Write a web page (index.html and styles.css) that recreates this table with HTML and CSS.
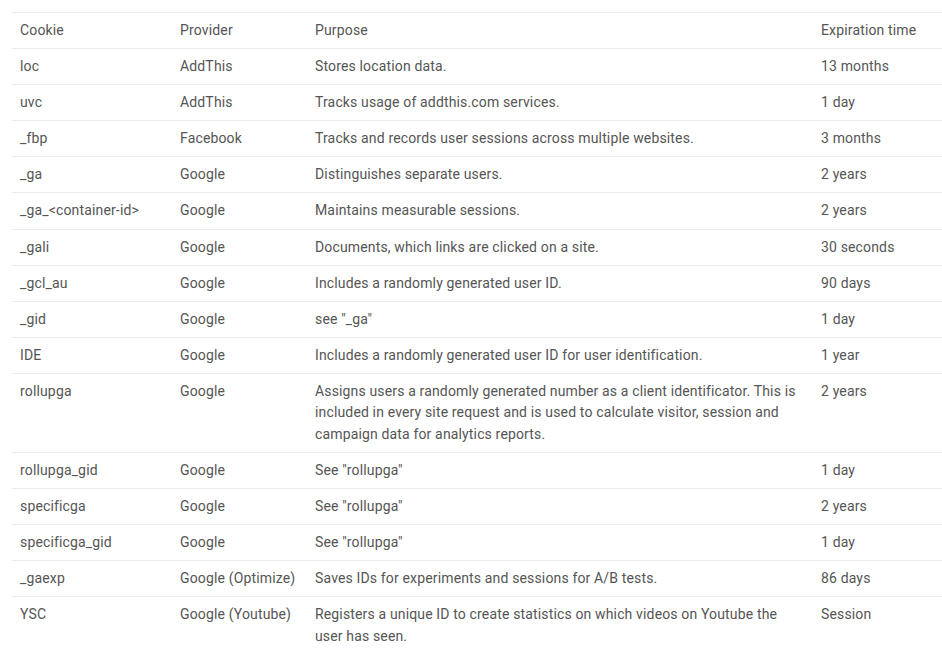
FILE: index.html
```html
<!DOCTYPE html>
<html>
<head>
<meta charset="utf-8">
<link rel="stylesheet" href="styles.css">
</head>
<body>
<table class="cookies">
<thead>
<tr><th class="c1">Cookie</th><th class="c2">Provider</th><th class="c3">Purpose</th><th class="c4">Expiration time</th></tr>
</thead>
<tbody>
<tr><td>loc</td><td>AddThis</td><td>Stores location data.</td><td>13 months</td></tr>
<tr><td>uvc</td><td>AddThis</td><td>Tracks usage of addthis.com services.</td><td>1 day</td></tr>
<tr><td>_fbp</td><td>Facebook</td><td>Tracks and records user sessions across multiple websites.</td><td>3 months</td></tr>
<tr><td>_ga</td><td>Google</td><td>Distinguishes separate users.</td><td>2 years</td></tr>
<tr><td>_ga_&lt;container-id&gt;</td><td>Google</td><td>Maintains measurable sessions.</td><td>2 years</td></tr>
<tr><td>_gali</td><td>Google</td><td>Documents, which links are clicked on a site.</td><td>30 seconds</td></tr>
<tr><td>_gcl_au</td><td>Google</td><td>Includes a randomly generated user ID.</td><td>90 days</td></tr>
<tr><td>_gid</td><td>Google</td><td>see "_ga"</td><td>1 day</td></tr>
<tr><td>IDE</td><td>Google</td><td>Includes a randomly generated user ID for user identification.</td><td>1 year</td></tr>
<tr><td>rollupga</td><td>Google</td><td>Assigns users a randomly generated number as a client identificator. This is included in every site request and is used to calculate visitor, session and campaign data for analytics reports.</td><td>2 years</td></tr>
<tr><td>rollupga_gid</td><td>Google</td><td>See "rollupga"</td><td>1 day</td></tr>
<tr><td>specificga</td><td>Google</td><td>See "rollupga"</td><td>2 years</td></tr>
<tr><td>specificga_gid</td><td>Google</td><td>See "rollupga"</td><td>1 day</td></tr>
<tr><td>_gaexp</td><td>Google (Optimize)</td><td>Saves IDs for experiments and sessions for A/B tests.</td><td>86 days</td></tr>
<tr><td>YSC</td><td>Google (Youtube)</td><td>Registers a unique ID to create statistics on which videos on Youtube the user has seen.</td><td>Session</td></tr>
</tbody>
</table>
</body>
</html>
```
FILE: styles.css
```css
html, body {
  margin: 0;
  background: #fff;
}
body {
  padding: 12px 0 0 12px;
  font-family: Roboto, "Liberation Sans", Arial, sans-serif;
  font-size: 14px;
  letter-spacing: 0.15px;
  color: #555;
}
.cookies {
  width: 930px;
  border-collapse: collapse;
  table-layout: fixed;
}
.cookies th,
.cookies td {
  box-sizing: border-box;
  text-align: left;
  vertical-align: top;
  font-weight: normal;
  padding: 7px 8px 6.6px;
  line-height: 21.5px;
  border-top: 1px solid #ebebeb;
}
.cookies th.c1 { width: 160px; }
.cookies th.c2 { width: 135px; }
.cookies th.c3 { width: 506px; }
.cookies th.c4 { width: 129px; }
```
